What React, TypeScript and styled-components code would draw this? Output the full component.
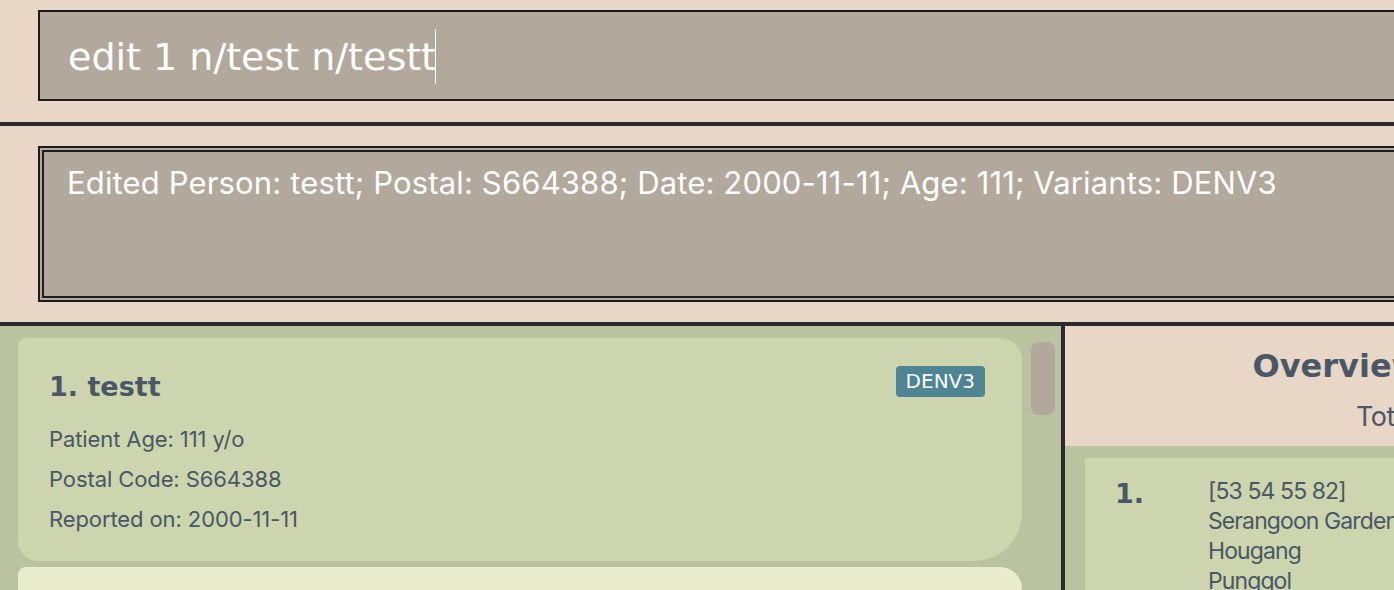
import React from "react";
import styled, { createGlobalStyle } from "styled-components";

const GlobalStyle = createGlobalStyle`
  html, body {
    margin: 0;
    padding: 0;
    overflow: hidden;
    background: #e8d6c6;
  }
  #root {
    width: 1815px;
  }
`;

const Page = styled.div`
  display: flex;
  flex-direction: column;
  width: 1815px;
  height: 590px;
  background: #e8d6c6;
  font-family: Inter, "Noto Sans", sans-serif;
  overflow: hidden;
`;

const CommandSection = styled.div`
  flex: none;
  padding: 10px 0 21px 38px;
  border-bottom: 4px solid #2b2b2b;
`;

const CommandBox = styled.div`
  height: 85px;
  box-sizing: content-box;
  border: 2px solid #1c1c1c;
  border-right: none;
  background: #b3a89c;
  display: flex;
  align-items: center;
  padding-left: 28px;
  padding-top: 2px;
  font-family: "DejaVu Sans", sans-serif;
  font-size: 38px;
  color: #ffffff;
  white-space: pre;
`;

const Caret = styled.span`
  display: inline-block;
  width: 1px;
  height: 55px;
  background: #ffffff;
  margin-left: -1px;
`;

const ResultSection = styled.div`
  flex: none;
  padding: 20px 0 20px 38px;
  border-bottom: 4px solid #2b2b2b;
`;

const ResultBox = styled.div`
  border: 6px double #1c1c1c;
  border-right: none;
  background: #b3a89c;
  padding: 12px 0 0 23px;
  box-sizing: border-box;
  height: 156px;
  font-family: Inter, sans-serif;
  font-size: 31px;
  letter-spacing: 0.15px;
  color: #ffffff;
  white-space: nowrap;
`;

const Main = styled.div`
  flex: 1;
  display: flex;
  min-height: 0;
`;

const ListPanel = styled.div`
  width: 1061px;
  flex: none;
  background: #bac39f;
  display: flex;
  border-right: 4px solid #2b2b2b;
`;

const CardList = styled.div`
  width: 1004px;
  flex: none;
  padding: 12px 0 0 18px;
  display: flex;
  flex-direction: column;
  gap: 6px;
`;

const Card = styled.div<{ $light?: boolean }>`
  flex: none;
  background: ${(p) => (p.$light ? "#e9edcd" : "#ccd5ae")};
  border-radius: 8px 22px 48px 20px;
  padding: 28px 37px 22px 31px;
  min-height: ${(p) => (p.$light ? "60px" : "auto")};
  color: #4a5766;
`;

const CardHeader = styled.div`
  display: flex;
  justify-content: space-between;
  align-items: flex-start;
`;

const CardTitle = styled.div`
  font-family: "DejaVu Sans", sans-serif;
  font-weight: bold;
  font-size: 27px;
  margin-top: 5px;
`;

const Badge = styled.span`
  background: #4d8595;
  color: #ffffff;
  border-radius: 4px;
  font-family: "DejaVu Sans", sans-serif;
  font-size: 20px;
  height: 31px;
  line-height: 31px;
  padding: 0 10px;
`;

const Details = styled.div`
  margin-top: 17px;
  font-family: Inter, sans-serif;
  font-size: 22px;
  line-height: 40px;
  letter-spacing: -0.1px;
`;

const ScrollTrack = styled.div`
  flex: 1;
  display: flex;
  justify-content: flex-start;
  align-items: flex-start;
  padding: 16px 0 0 9px;
`;

const Thumb = styled.div`
  width: 24px;
  height: 73px;
  border-radius: 8px;
  background: #b3a89c;
`;

const OverviewPanel = styled.div`
  width: 750px;
  flex: none;
  display: flex;
  flex-direction: column;
  background: #bac39f;
`;

const OverviewHeader = styled.div`
  flex: none;
  height: 120px;
  box-sizing: border-box;
  background: #e8d6c6;
  text-align: center;
  padding-top: 21px;
  color: #4a5766;
`;

const OverviewTitle = styled.div`
  font-family: "DejaVu Sans", sans-serif;
  font-weight: bold;
  font-size: 32px;
`;

const OverviewSubtitle = styled.div`
  margin-top: 15px;
  font-family: Inter, sans-serif;
  font-size: 27px;
  letter-spacing: -0.5px;
`;

const ClusterList = styled.div`
  flex: none;
  padding: 12px 0 0 20px;
`;

const ClusterCard = styled.div`
  display: grid;
  grid-template-columns: 93px 1fr;
  background: #ccd5ae;
  padding: 18px 0 20px 30px;
  color: #4a5766;
`;

const ClusterIndex = styled.div`
  font-family: "DejaVu Sans", sans-serif;
  font-weight: bold;
  font-size: 27px;
  margin-top: 2px;
`;

const ClusterLines = styled.div`
  font-family: Inter, sans-serif;
  font-size: 23px;
  line-height: 30px;
  letter-spacing: -0.9px;
`;

export default function App() {
  return (
    <>
      <GlobalStyle />
      <Page>
        <CommandSection>
          <CommandBox>
            edit 1 n/test n/testt
            <Caret />
          </CommandBox>
        </CommandSection>
        <ResultSection>
          <ResultBox>
            Edited Person: testt; Postal: S664388; Date: 2000-11-11; Age: 111; Variants: DENV3
          </ResultBox>
        </ResultSection>
        <Main>
          <ListPanel>
            <CardList>
              <Card>
                <CardHeader>
                  <CardTitle>1. testt</CardTitle>
                  <Badge>DENV3</Badge>
                </CardHeader>
                <Details>
                  <div>Patient Age: 111 y/o</div>
                  <div>Postal Code: S664388</div>
                  <div>Reported on: 2000-11-11</div>
                </Details>
              </Card>
              <Card $light />
            </CardList>
            <ScrollTrack>
              <Thumb />
            </ScrollTrack>
          </ListPanel>
          <OverviewPanel>
            <OverviewHeader>
              <OverviewTitle>Overview of Clusters</OverviewTitle>
              <OverviewSubtitle>Total Cases: 1</OverviewSubtitle>
            </OverviewHeader>
            <ClusterList>
              <ClusterCard>
                <ClusterIndex>1.</ClusterIndex>
                <ClusterLines>
                  <div>[53 54 55 82]</div>
                  <div>Serangoon Gardens</div>
                  <div>Hougang</div>
                  <div>Punggol</div>
                </ClusterLines>
              </ClusterCard>
            </ClusterList>
          </OverviewPanel>
        </Main>
      </Page>
    </>
  );
}
